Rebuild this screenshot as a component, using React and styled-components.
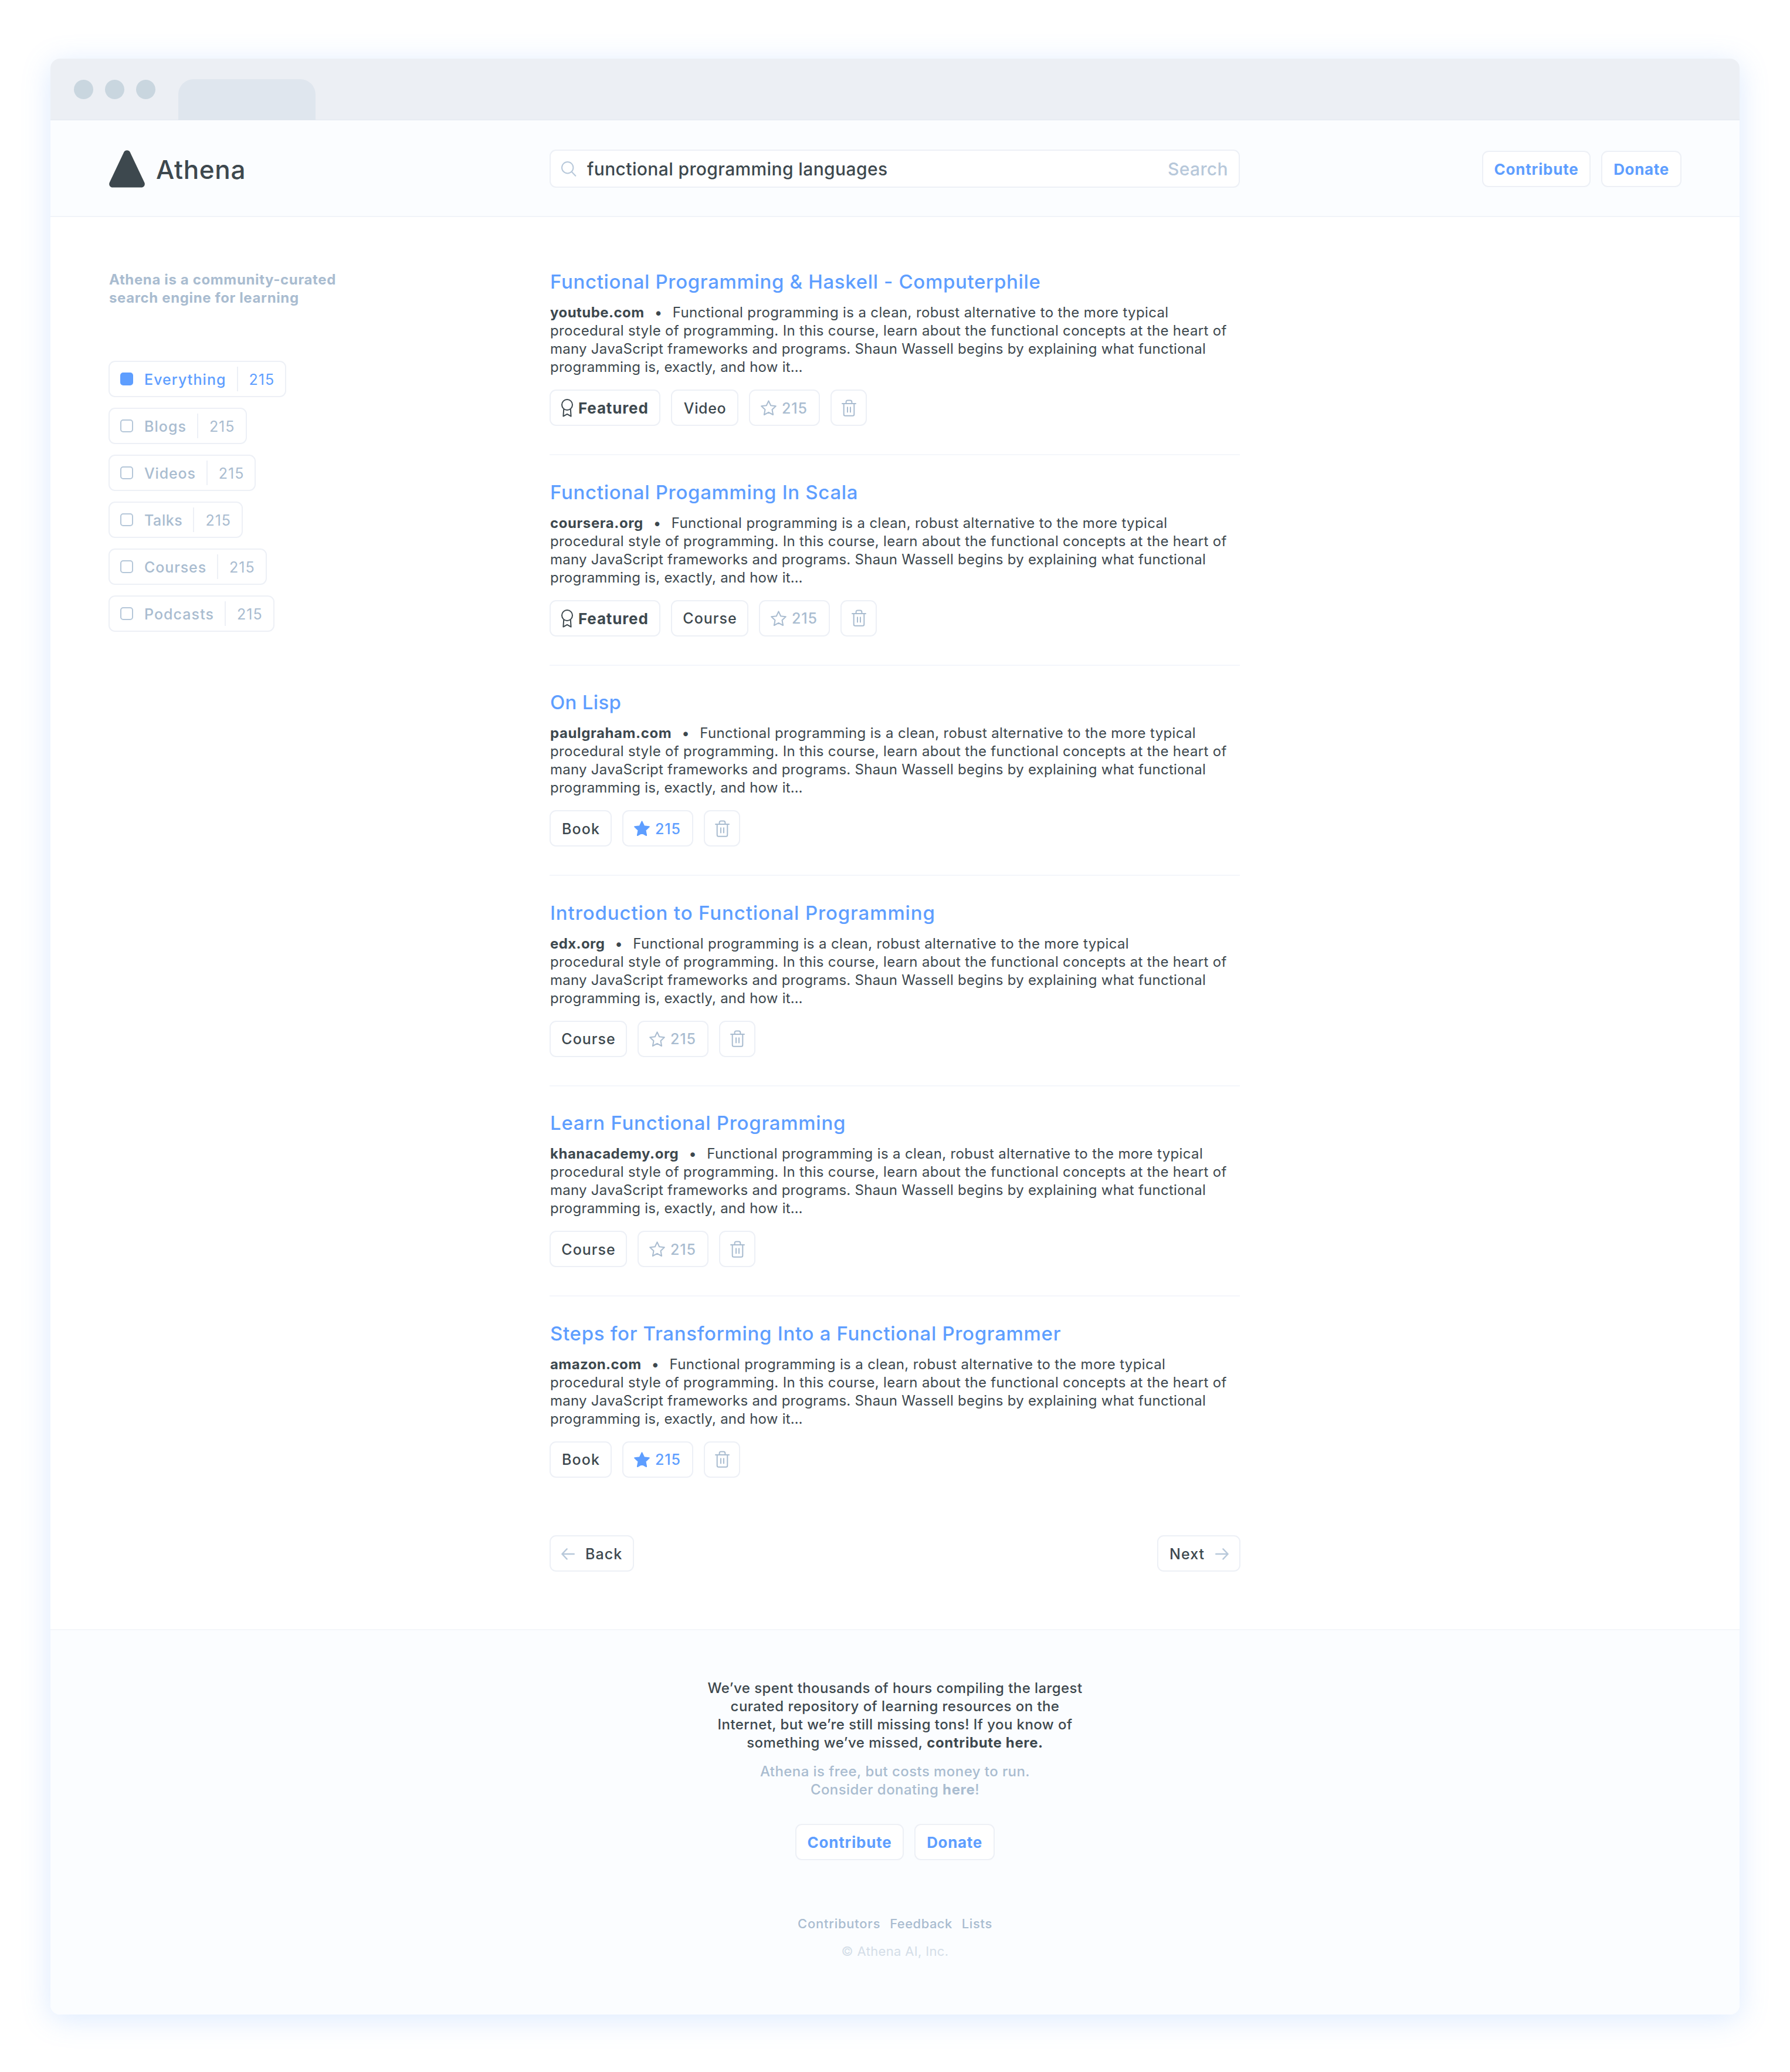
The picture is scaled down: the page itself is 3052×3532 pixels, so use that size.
import React from 'react';
import styled, { createGlobalStyle, css } from 'styled-components';

const color = {
  ink: '#3d484e',
  blue: '#5e9eff',
  muted: '#a9bcd0',
  soft: '#b7c8da',
  faint: '#d4dee8',
  line: '#edf0f6',
  hair: '#f4f6fb',
  tint: '#fbfdff',
};

const GlobalStyle = createGlobalStyle`
  * { box-sizing: border-box; }
  body {
    margin: 0;
    background: #fff;
    color: ${color.ink};
    font-family: Inter, "Liberation Sans", sans-serif;
    -webkit-font-smoothing: antialiased;
  }
  a { color: inherit; text-decoration: none; }
`;

const Page = styled.div`
  width: 3052px;
  height: 3532px;
  padding: 100px 86px 98px;
  overflow: hidden;
`;

const Window = styled.div`
  display: flex;
  flex-direction: column;
  height: 3334px;
  border-radius: 16px;
  overflow: hidden;
  background: #fff;
  box-shadow: 0 8px 50px rgba(94, 158, 255, 0.22);
`;

const TitleBar = styled.div`
  display: flex;
  align-items: flex-end;
  height: 105px;
  flex: none;
  padding-left: 40px;
  background: #eceff4;
  border-bottom: 1px solid #e2e8ef;
`;

const Dots = styled.div`
  display: flex;
  gap: 20px;
  padding-bottom: 35px;
`;

const Dot = styled.span`
  width: 33px;
  height: 33px;
  border-radius: 50%;
  background: #c9d6df;
`;

const BrowserTab = styled.div`
  width: 234px;
  height: 70px;
  margin: 0 0 -1px 39px;
  border-radius: 26px 26px 0 0;
  background: #dfe6ee;
`;

const columns = css`
  display: grid;
  grid-template-columns: 752px 1177px 1fr;
  padding: 0 99px;
`;

const Header = styled.header`
  ${columns}
  align-items: center;
  height: 165px;
  flex: none;
  padding-top: 2px;
  background: ${color.tint};
  border-bottom: 2px solid #f1f4f9;
`;

const Brand = styled.div`
  display: flex;
  align-items: center;
  gap: 19px;
  padding-left: 1px;
  svg { display: block; }
`;

const BrandName = styled.span`
  padding-top: 2px;
  font-size: 44px;
  line-height: 60px;
  font-weight: 500;
  letter-spacing: 0.7px;
`;

const SearchBox = styled.div`
  display: flex;
  align-items: center;
  height: 65px;
  padding: 1px 18px 0 18px;
  border: 2px solid ${color.line};
  border-radius: 11px;
  background: #fff;
  font-size: 30px;
  font-weight: 500;
  letter-spacing: 0.38px;
`;

const Query = styled.span`
  flex: 1;
  margin-left: 18px;
`;

const SearchLabel = styled.span`
  color: ${color.soft};
`;

const ButtonRow = styled.div`
  display: flex;
  justify-content: ${(p) => p.$justify || 'flex-start'};
  gap: 18px;
`;

const box = css`
  display: flex;
  align-items: center;
  height: 62px;
  flex: none;
  border: 2px solid ${color.line};
  border-radius: 11px;
  background: #fff;
`;

const LinkButton = styled.a`
  ${box}
  justify-content: center;
  width: ${(p) => p.$width}px;
  padding: 1px 0 0;
  color: ${color.blue};
  font-size: 26px;
  font-weight: 700;
  letter-spacing: ${(p) => p.$track}px;
`;

const Main = styled.main`
  ${columns}
  height: 2407px;
  flex: none;
`;

const Sidebar = styled.aside`
  padding-top: 91px;
`;

const Tagline = styled.p`
  margin: 0 0 92px;
  padding-left: 1px;
  color: ${color.muted};
  font-size: 24px;
  line-height: 31px;
  font-weight: 700;
  letter-spacing: 0.63px;
`;

const Filters = styled.div`
  display: flex;
  flex-direction: column;
  align-items: flex-start;
  gap: 18px;
`;

const Filter = styled.div`
  ${box}
  padding: 0 18px;
  color: ${(p) => (p.$active ? color.blue : color.muted)};
  font-size: 25px;
  font-weight: 500;
`;

const Check = styled.span`
  width: 22px;
  height: 22px;
  border-radius: 5px;
  border: 2px solid ${(p) => (p.$active ? color.blue : '#b5c7d9')};
  background: ${(p) => (p.$active ? color.blue : '#fff')};
`;

const FilterName = styled.span`
  padding-top: 1px;
  margin: 0 18px 0 19px;
  letter-spacing: ${(p) => p.$track}px;
`;

const Divider = styled.span`
  width: 2px;
  height: 42px;
  background: ${color.line};
`;

const FilterCount = styled.span`
  padding-top: 1px;
  margin-left: 19px;
  font-weight: 400;
  letter-spacing: 1px;
`;

const Results = styled.section`
  padding-top: 47.5px;
`;

const Result = styled.article`
  height: ${(p) => (p.$last ? 308.5 : 358.5)}px;
  padding-top: 42.5px;
  border-bottom: ${(p) => (p.$last ? 'none' : `2px solid ${color.hair}`)};
`;

const ResultTitle = styled.h2`
  margin: 0 0 17px;
  padding-left: 1px;
  color: ${color.blue};
  font-size: 33px;
  line-height: 40px;
  font-weight: 500;
  letter-spacing: ${(p) => p.$track}px;
  white-space: nowrap;
`;

const Summary = styled.div`
  margin-bottom: 23px;
  padding-left: 1px;
  font-size: 24px;
  line-height: 31px;
  white-space: nowrap;
`;

const SummaryLine = styled.div`
  display: flex;
  height: 31px;
  letter-spacing: ${(p) => p.$track}px;
`;

const Source = styled.b`
  font-weight: 700;
  letter-spacing: ${(p) => p.$track}px;
`;

const Bullet = styled.span`
  width: 48px;
  text-align: center;
`;

const Tag = styled.span`
  ${box}
  justify-content: center;
  width: ${(p) => p.$width}px;
  padding: 1px 0 0 1px;
  font-size: 25px;
  font-weight: 500;
  letter-spacing: ${(p) => p.$track}px;
`;

const FeaturedTag = styled.span`
  ${box}
  gap: 9px;
  width: 189px;
  padding: 1px 0 0 18px;
  font-size: 26px;
  font-weight: 700;
  letter-spacing: 0.84px;
`;

const StarTag = styled.span`
  ${box}
  gap: 9px;
  width: 121px;
  padding: 1px 0 0 18px;
  color: ${(p) => (p.$on ? color.blue : color.muted)};
  font-size: 25px;
  font-weight: 500;
  letter-spacing: 0.9px;
`;

const TrashTag = styled.span`
  ${box}
  justify-content: center;
  width: 62px;
  color: ${color.muted};
`;

const Pager = styled.nav`
  display: flex;
  justify-content: space-between;
  margin: 98.5px -1px 0 0;
`;

const PagerButton = styled.a`
  ${box}
  gap: 18px;
  width: ${(p) => p.$width}px;
  padding: 1px 0 0 ${(p) => p.$inset}px;
  font-size: 25px;
  font-weight: 500;
  letter-spacing: 1.05px;
`;

const Footer = styled.footer`
  display: flex;
  flex: 1;
  flex-direction: column;
  align-items: center;
  padding-top: 83px;
  border-top: 2px solid #f4f6fa;
  background: ${color.tint};
`;

const FooterText = styled.p`
  margin: 0 0 ${(p) => p.$after}px;
  color: ${(p) => (p.$muted ? color.muted : color.ink)};
  font-size: 24px;
  line-height: 31px;
  font-weight: 500;
  text-align: center;
  letter-spacing: 0.43px;
  white-space: nowrap;
  b { font-weight: 700; letter-spacing: 0.64px; }
`;

const FooterLinks = styled.div`
  display: flex;
  gap: 16px;
  margin: 93px 0 17px;
  color: ${color.muted};
  font-size: 22px;
  line-height: 30px;
  font-weight: 500;
`;

const FooterLink = styled.a`
  letter-spacing: ${(p) => p.$track}px;
`;

const Copyright = styled.small`
  color: ${color.faint};
  font-size: 22px;
  line-height: 30px;
  font-weight: 400;
  letter-spacing: 0.34px;
`;

const Logo = () => (
  <svg width="61" height="64" viewBox="0 0 61 64">
    <path
      d="M25.2 3.4 C27.2 -0.8 33.8 -0.8 35.8 3.4 L60.2 55 C62 59 59.6 63.5 55 63.5 H6 C1.4 63.5 -1 59 0.8 55 Z"
      fill={color.ink}
    />
  </svg>
);

const Magnifier = () => (
  <svg width="26" height="26" viewBox="0 0 26 26" fill="none" stroke={color.soft} strokeWidth="2" strokeLinecap="round">
    <circle cx="10.7" cy="10.7" r="9.7" />
    <path d="M17.6 17.8 L24.3 24.8" />
  </svg>
);

const Ribbon = () => (
  <svg width="20" height="31" viewBox="0 0 20 31" fill="none" stroke="currentColor" strokeWidth="2" strokeLinejoin="round">
    <circle cx="10" cy="10" r="9" />
    <path d="M4.2 17.4 L3.4 29.6 L10 25.8 L16.6 29.6 L15.8 17.4" />
  </svg>
);

const Star = ({ on }) => (
  <svg width="27" height="27" viewBox="0 0 27 27" fill={on ? 'currentColor' : 'none'} stroke="currentColor" strokeWidth="2" strokeLinejoin="round">
    <path d="M13.5 1.4 L17.2 9.2 L25.8 10.3 L19.5 16.3 L21.1 25 L13.5 20.8 L5.9 25 L7.5 16.3 L1.2 10.3 L9.8 9.2 Z" />
  </svg>
);

const Trash = () => (
  <svg width="25" height="29" viewBox="0 0 25 29" fill="none" stroke="currentColor" strokeWidth="2" strokeLinecap="round">
    <path d="M1 7 H24" />
    <path d="M7.6 6.6 V4.4 C7.6 2.4 8.6 1.4 10.4 1.4 H14.6 C16.4 1.4 17.4 2.4 17.4 4.4 V6.6" />
    <path d="M3.7 7.4 V25.2 Q3.7 27.8 6.2 27.8 H18.8 Q21.3 27.8 21.3 25.2 V7.4" />
    <path d="M10 13.2 V21.4 M15 13.2 V21.4" />
  </svg>
);

const Arrow = ({ left }) => (
  <svg width="23" height="20" viewBox="0 0 23 20" fill="none" stroke={color.soft} strokeWidth="2.4" strokeLinecap="round" strokeLinejoin="round">
    {left ? <path d="M21.8 10 H1.4 M9.6 1.4 L1.4 10 L9.6 18.6" /> : <path d="M1.2 10 H21.6 M13.4 1.4 L21.6 10 L13.4 18.6" />}
  </svg>
);

const filters = [
  { name: 'Everything', active: true, track: 1.07 },
  { name: 'Blogs', track: 1.02 },
  { name: 'Videos', track: 0.85 },
  { name: 'Talks', track: 0.6 },
  { name: 'Courses', track: 0.9 },
  { name: 'Podcasts', track: 1.06 },
];

const results = [
  { title: 'Functional Programming & Haskell - Computerphile', titleTrack: 0.66, source: 'youtube.com', track: 0.46, featured: true, kind: 'Video' },
  { title: 'Functional Progamming In Scala', titleTrack: 0.68, source: 'coursera.org', track: 0.58, featured: true, kind: 'Course' },
  { title: 'On Lisp', titleTrack: 0.3, source: 'paulgraham.com', track: 0.6, kind: 'Book', starred: true },
  { title: 'Introduction to Functional Programming', titleTrack: 0.87, source: 'edx.org', track: 0.4, kind: 'Course' },
  { title: 'Learn Functional Programming', titleTrack: 0.74, source: 'khanacademy.org', track: 0.52, kind: 'Course' },
  { title: 'Steps for Transforming Into a Functional Programmer', titleTrack: 0.69, source: 'amazon.com', track: 0.4, kind: 'Book', starred: true },
];

const kinds = {
  Video: { width: 115, track: 0.63 },
  Course: { width: 132, track: 1 },
  Book: { width: 106, track: 1.1 },
};

const CallToAction = ({ justify }) => (
  <ButtonRow $justify={justify}>
    <LinkButton $width={185} $track={0.8}>Contribute</LinkButton>
    <LinkButton $width={137} $track={0.65}>Donate</LinkButton>
  </ButtonRow>
);

const ResultItem = ({ item, last }) => (
  <Result $last={last}>
    <ResultTitle $track={item.titleTrack}>{item.title}</ResultTitle>
    <Summary>
      <SummaryLine $track={0.36}>
        <Source $track={item.track}>{item.source}</Source>
        <Bullet>•</Bullet>
        <span>Functional programming is a clean, robust alternative to the more typical</span>
      </SummaryLine>
      <SummaryLine $track={0.324}>
        procedural style of programming. In this course, learn about the functional concepts at the heart of
      </SummaryLine>
      <SummaryLine $track={0.261}>
        many JavaScript frameworks and programs. Shaun Wassell begins by explaining what functional
      </SummaryLine>
      <SummaryLine $track={0.236}>programming is, exactly, and how it…</SummaryLine>
    </Summary>
    <ButtonRow>
      {item.featured && (
        <FeaturedTag>
          <Ribbon />
          Featured
        </FeaturedTag>
      )}
      <Tag $width={kinds[item.kind].width} $track={kinds[item.kind].track}>{item.kind}</Tag>
      <StarTag $on={item.starred}>
        <Star on={item.starred} />
        215
      </StarTag>
      <TrashTag>
        <Trash />
      </TrashTag>
    </ButtonRow>
  </Result>
);

export default function App() {
  return (
    <Page>
      <GlobalStyle />
      <Window>
        <TitleBar>
          <Dots>
            <Dot />
            <Dot />
            <Dot />
          </Dots>
          <BrowserTab />
        </TitleBar>
        <Header>
          <Brand>
            <Logo />
            <BrandName>Athena</BrandName>
          </Brand>
          <SearchBox>
            <Magnifier />
            <Query>functional programming languages</Query>
            <SearchLabel>Search</SearchLabel>
          </SearchBox>
          <CallToAction justify="flex-end" />
        </Header>
        <Main>
          <Sidebar>
            <Tagline>
              Athena is a community-curated
              <br />
              search engine for learning
            </Tagline>
            <Filters>
              {filters.map((f) => (
                <Filter key={f.name} $active={f.active}>
                  <Check $active={f.active} />
                  <FilterName $track={f.track}>{f.name}</FilterName>
                  <Divider />
                  <FilterCount>215</FilterCount>
                </Filter>
              ))}
            </Filters>
          </Sidebar>
          <Results>
            {results.map((item, i) => (
              <ResultItem key={item.title} item={item} last={i === results.length - 1} />
            ))}
            <Pager>
              <PagerButton $width={144} $inset={18}>
                <Arrow left />
                Back
              </PagerButton>
              <PagerButton $width={142} $inset={19}>
                Next
                <Arrow />
              </PagerButton>
            </Pager>
          </Results>
        </Main>
        <Footer>
          <FooterText $after={18}>
            We’ve spent thousands of hours compiling the largest
            <br />
            curated repository of learning resources on the
            <br />
            Internet, but we’re still missing tons! If you know of
            <br />
            something we’ve missed, <b>contribute here.</b>
          </FooterText>
          <FooterText $muted $after={43}>
            Athena is free, but costs money to run.
            <br />
            Consider donating <b>here</b>!
          </FooterText>
          <CallToAction />
          <FooterLinks>
            <FooterLink $track={0.75}>Contributors</FooterLink>
            <FooterLink $track={0.45}>Feedback</FooterLink>
            <FooterLink $track={0.65}>Lists</FooterLink>
          </FooterLinks>
          <Copyright>© Athena AI, Inc.</Copyright>
        </Footer>
      </Window>
    </Page>
  );
}
